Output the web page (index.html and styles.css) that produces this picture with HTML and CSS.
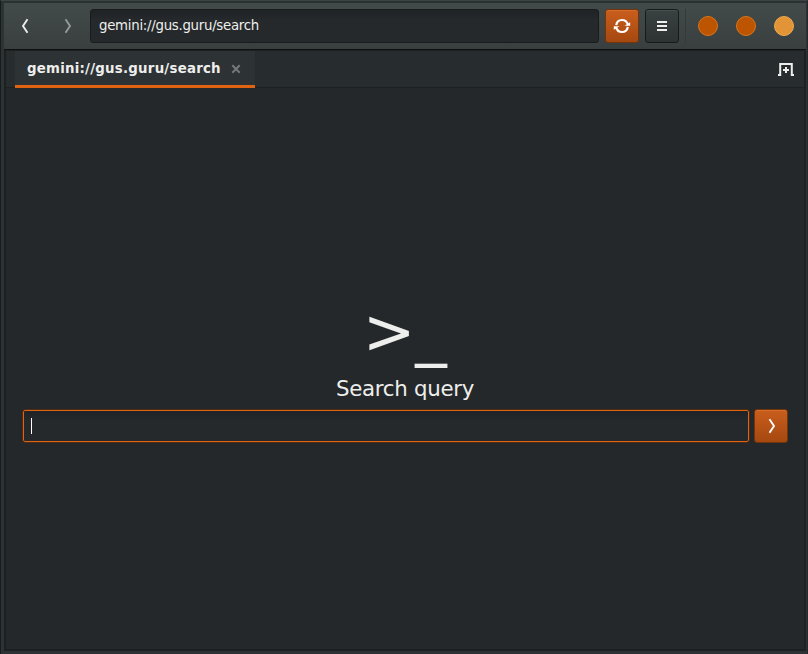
FILE: index.html
```html
<!DOCTYPE html>
<html lang="en">
<head>
<meta charset="utf-8">
<title>gemini://gus.guru/search</title>
<link rel="stylesheet" href="styles.css">
</head>
<body>
<div class="window">
  <header class="toolbar">
    <button class="nav" aria-label="Back"><svg width="8" height="16" viewBox="0 0 8 16"><path d="M6.500 1.300 2 8l4.500 6.700"/></svg></button>
    <button class="nav nav-off" aria-label="Forward"><svg width="8" height="16" viewBox="0 0 8 16"><path d="M1.500 1.300 6 8l-4.500 6.700"/></svg></button>
    <div class="address">gemini://gus.guru/search</div>
    <button class="btn accent reload" aria-label="Reload"><svg width="16" height="16" viewBox="0 0 16 16"><path d="M2.200 7.200C2.700 4 5 2 8 2c2.700 0 5 1.700 5.800 4.400M13.800 8.800C13.300 12 11 14 8 14c-2.700 0-5-1.700-5.800-4.400"/><path class="fill" d="M10.500 7.800h5.700V4.200zM5.500 8.200H-.2v3.600z"/></svg></button>
    <button class="btn menu" aria-label="Menu"><svg width="10" height="12" viewBox="0 0 10 12"><path d="M0 2h10M0 6h10M0 10h10"/></svg></button>
    <div class="divider"></div>
    <div class="controls"><i></i><i></i><i class="close"></i></div>
  </header>
  <section class="body">
    <nav class="tabs">
      <div class="tab">gemini://gus.guru/search<svg width="10" height="10" viewBox="0 0 10 10"><path d="m1.300 1.300 7.400 7.400m0-7.400L1.300 8.700"/></svg></div>
      <svg class="newtab" width="16" height="13" viewBox="0 0 16 13"><path d="M0 12h2.200V1h11.600v11H16M8 4v6M5 7h6"/></svg>
    </nav>
    <main class="content">
      <div class="prompt">&gt;_</div>
      <h1>Search query</h1>
      <div class="query">
        <div class="field"><span class="caret"></span></div>
        <button class="btn accent go" aria-label="Go"><svg width="8" height="16" viewBox="0 0 8 16"><path d="M1.500 1.300 6 8l-4.500 6.700"/></svg></button>
      </div>
    </main>
  </section>
</div>
</body>
</html>
```
FILE: styles.css
```css
* { box-sizing: border-box; }
body {
  margin: 0;
  height: 654px;
  overflow: hidden;
  background: #2d3335;
  color: #eeeeec;
  font-family: "DejaVu Sans", sans-serif;
}
button { padding: 0; border: 0; background: none; display: flex; align-items: center; justify-content: center; }
svg { display: block; fill: none; stroke: #eeeeec; stroke-width: 2; }
.window {
  height: 654px;
  padding: 0 1px 3px 3px;
  border-top: 1px solid #3c4343;
  border-left: 1px solid #181b1c;
  border-right: 1px solid #25292b;
  display: flex;
  flex-direction: column;
}
.toolbar {
  height: 49px;
  flex: none;
  display: flex;
  align-items: center;
  border-top: 2px solid #2b3032;
  border-bottom: 1px solid #0e1011;
  background: linear-gradient(#434b4a, #393f3f);
}
.nav { width: 42px; height: 34px; }
.nav svg, .go svg { stroke-width: 1.900; }
.nav-off { opacity: .5; width: 44px; }
.address {
  width: 509px;
  height: 34px;
  padding-left: 8px;
  border: 1px solid #191c1d;
  border-radius: 3px;
  background: linear-gradient(#1f2325, #25292b 10px);
  font-size: 13.333px;
  letter-spacing: -.28px;
  line-height: 31px;
}
.btn { width: 34px; height: 34px; border: 1px solid #171a1b; border-radius: 3px; background: linear-gradient(#3a4141, #2d3233); box-shadow: inset 0 1px #485050; }
.accent { border-color: #713509; background: linear-gradient(#c95e1d, #a54810); box-shadow: inset 0 1px #d66b2a; }
.accent svg { stroke: #fff; }
.reload { margin-left: 6px; }
.reload svg { stroke-width: 2.200; overflow: visible; }
.reload .fill { fill: #fff; stroke: none; }
.menu { margin-left: 6px; }
.go { padding-left: 1px; }
.divider { width: 1px; height: 34px; margin-left: 6px; background: #343a3a; }
.controls { display: flex; gap: 18px; margin-left: 12px; }
.controls i { width: 20px; height: 20px; border: 1px solid #dc7419; border-radius: 50%; background: #bd5500; }
.controls .close { border-color: #f0a94e; background: #e39437; }
.body {
  flex: 1;
  display: flex;
  flex-direction: column;
  border: solid #1d2021;
  border-width: 1px 2px 2px;
  background: #24282a;
}
.tabs {
  height: 37px;
  flex: none;
  display: flex;
  align-items: center;
  justify-content: space-between;
  padding: 0 10px 0 9px;
  border-bottom: 1px solid #1d2022;
  background: #272c2e;
}
.tab {
  display: flex;
  align-items: center;
  gap: 10px;
  width: 240px;
  height: 37px;
  padding: 1px 0 0 12px;
  margin-bottom: -1px;
  border-bottom: 3px solid #e06312;
  background: #2d3234;
  font-size: 13.333px;
  font-weight: bold;
  letter-spacing: .24px;
}
.tab svg { stroke: #747879; margin-top: 1px; }
.content {
  flex: 1;
  display: flex;
  flex-direction: column;
  align-items: center;
  padding: 207px 16px 0 17px;
}
.prompt { font-size: 63px; line-height: 74px; letter-spacing: -.5px; margin-right: 2px; }
h1 { margin: 1px 1px 2px 0; font-size: 21.333px; font-weight: normal; line-height: 37px; letter-spacing: -.3px; }
.query { align-self: stretch; display: flex; align-items: center; gap: 5px; }
.field {
  flex: 1;
  height: 32px;
  display: flex;
  align-items: center;
  padding-left: 7px;
  border: 1px solid #e06312;
  outline: 1px solid #4d2b15;
  border-radius: 2px;
  background: linear-gradient(#1f2325, #25292b 10px);
}
.caret { width: 1px; height: 16px; background: #fff; }
```
